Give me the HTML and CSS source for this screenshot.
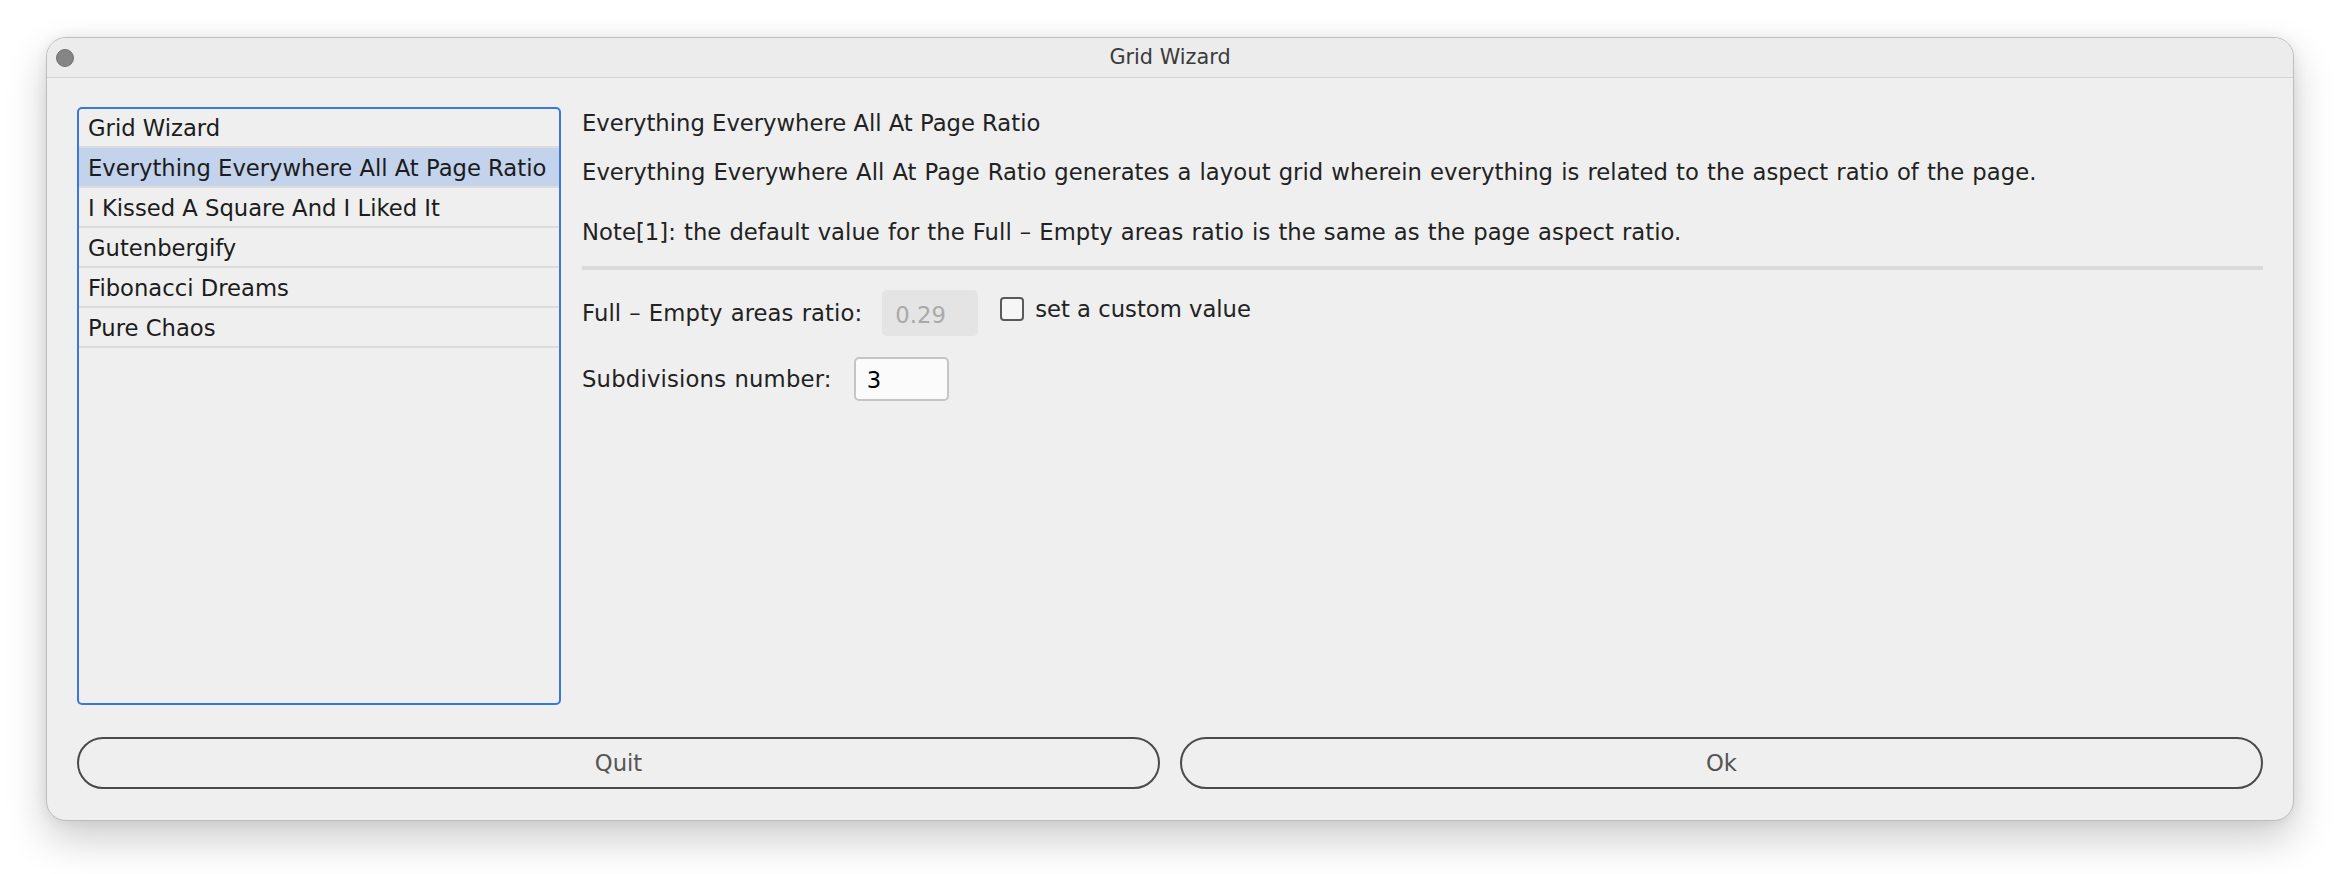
FILE: index.html
```html
<!DOCTYPE html>
<html lang="en">
<head>
<meta charset="utf-8">
<title>Grid Wizard</title>
<link rel="stylesheet" href="styles.css">
</head>
<body>
<div class="desktop">
  <div class="window">
    <div class="titlebar">
      <div class="controls"><span class="dot"></span></div>
      <div class="title">Grid Wizard</div>
      <div class="spacer"></div>
    </div>
    <div class="content">
      <div class="main">
        <ul class="list">
          <li class="item">Grid Wizard</li>
          <li class="item selected">Everything Everywhere All At Page Ratio</li>
          <li class="item">I Kissed A Square And I Liked It</li>
          <li class="item">Gutenbergify</li>
          <li class="item">Fibonacci Dreams</li>
          <li class="item">Pure Chaos</li>
        </ul>
        <div class="panel">
          <div class="heading">Everything Everywhere All At Page Ratio</div>
          <div class="desc">Everything Everywhere All At Page Ratio generates a layout grid wherein everything is related to the aspect ratio of the page.</div>
          <div class="note">Note[1]: the default value for the Full – Empty areas ratio is the same as the page aspect ratio.</div>
          <div class="sep"></div>
          <div class="row row-ratio">
            <span class="label label-ratio">Full – Empty areas ratio:</span>
            <span class="field disabled">0.29</span>
            <label class="check"><span class="box"></span><span class="check-text">set a custom value</span></label>
          </div>
          <div class="row row-sub">
            <span class="label">Subdivisions number:</span>
            <span class="field editable">3</span>
          </div>
        </div>
      </div>
      <div class="buttons">
        <button class="btn">Quit</button>
        <button class="btn">Ok</button>
      </div>
    </div>
  </div>
</div>
</body>
</html>
```
FILE: styles.css
```css
html, body {
  margin: 0;
  padding: 0;
  background: #ffffff;
}
body {
  width: 2340px;
  height: 874px;
  overflow: hidden;
  font-family: "DejaVu Sans", "Liberation Sans", sans-serif;
  font-size: 22.7px;
  color: #222222;
}
.desktop {
  padding: 37px 46px 0 46px;
}
.window {
  width: 2248px;
  height: 784px;
  box-sizing: border-box;
  border: 1px solid #bdbdbd;
  border-radius: 20px;
  background: #efefef;
  box-shadow: 0 18px 42px rgba(0, 0, 0, 0.20), 0 0 14px rgba(0, 0, 0, 0.07);
  display: flex;
  flex-direction: column;
  overflow: hidden;
}
.titlebar {
  height: 39px;
  border-bottom: 1px solid #d3d3d3;
  background: #ececec;
  display: grid;
  grid-template-columns: 1fr auto 1fr;
  align-items: center;
}
.controls {
  padding-left: 9px;
  display: flex;
  align-items: center;
}
.dot {
  width: 16px;
  height: 16px;
  border-radius: 50%;
  background: #858585;
  border: 1px solid #727272;
}
.title {
  font-size: 20.8px;
  color: #3a3a3a;
  line-height: 39px;
}
.content {
  flex: 1;
  padding: 29px 30px 31px 30px;
  display: flex;
  flex-direction: column;
}
.main {
  height: 598px;
  display: flex;
  gap: 21px;
}
.list {
  margin: 0;
  padding: 0;
  list-style: none;
  width: 484px;
  box-sizing: border-box;
  border: 2px solid #3a78de;
  border-radius: 5px;
  background: #efefef;
  flex: none;
}
.item {
  box-sizing: border-box;
  height: 40px;
  line-height: 36px;
  padding: 2px 0 0 9px;
  border-bottom: 2px solid #dcdcdc;
  color: #1c1c1c;
  white-space: nowrap;
}
.item:first-child {
  height: 39px;
  line-height: 35px;
}
.item.selected {
  background: #c3d3ec;
}
.panel {
  flex: 1;
  display: flex;
  flex-direction: column;
  word-spacing: 0.8px;
  letter-spacing: 0.05px;
}
.heading, .desc, .note {
  line-height: 30px;
  white-space: nowrap;
}
.heading {
  word-spacing: 0;
  letter-spacing: 0;
  padding-top: 1px;
}
.desc {
  margin-top: 19px;
}
.note {
  margin-top: 30px;
}
.sep {
  margin-top: 19px;
  height: 4px;
  background: #dadada;
}
.row {
  display: flex;
  align-items: center;
}
.row-ratio {
  margin-top: 20px;
  height: 46px;
}
.row-sub {
  margin-top: 21px;
  height: 44px;
}
.label {
  white-space: nowrap;
  margin-right: 22px;
  letter-spacing: 0.2px;
}
.label-ratio {
  letter-spacing: 0.1px;
  margin-right: 20px;
}
.field {
  box-sizing: border-box;
  border-radius: 5px;
  display: flex;
  align-items: center;
}
.field.disabled {
  width: 96px;
  height: 46px;
  background: #e4e4e4;
  color: #a9a9a9;
  padding-left: 13px;
  padding-top: 3px;
}
.field.editable {
  width: 95px;
  height: 44px;
  background: #fbfbfb;
  border: 2px solid #c5c5c5;
  color: #000000;
  padding-left: 11px;
  padding-top: 2px;
}
.check {
  margin-left: 22px;
  margin-bottom: 8px;
  display: flex;
  align-items: center;
  gap: 11px;
}
.box {
  width: 24px;
  height: 24px;
  box-sizing: border-box;
  border: 2px solid #5a5a5a;
  border-radius: 4px;
  background: #f6f6f6;
}
.check-text {
  white-space: nowrap;
  word-spacing: 0;
  letter-spacing: 0;
}
.buttons {
  margin-top: 32px;
  display: grid;
  grid-template-columns: 1fr 1fr;
  gap: 20px;
}
.btn {
  height: 52px;
  box-sizing: border-box;
  border: 2px solid #4a4a4a;
  border-radius: 26px;
  background: #efefef;
  font-family: "DejaVu Sans", "Liberation Sans", sans-serif;
  font-size: 22.7px;
  color: #555555;
  padding: 0 0 1px 0;
}
```
